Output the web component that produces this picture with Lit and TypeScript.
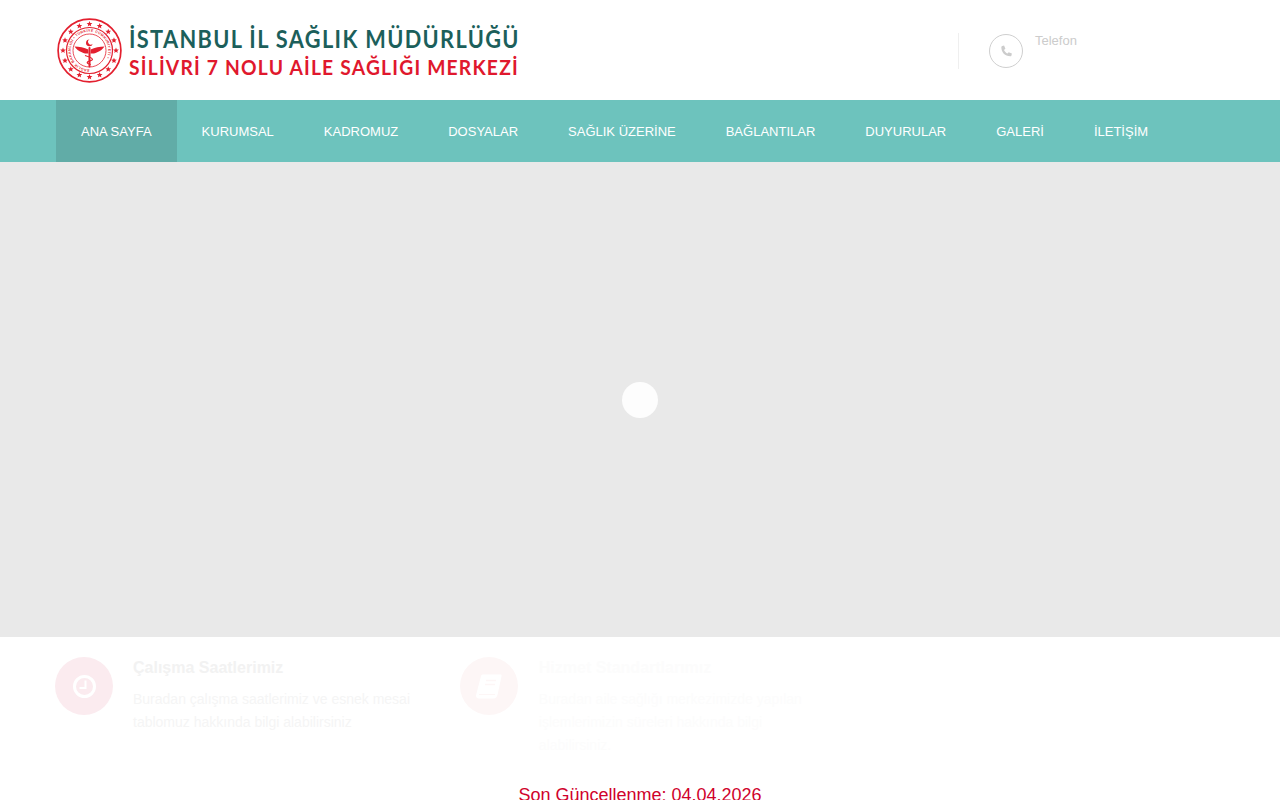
import { LitElement, html, css, svg } from "lit";
import { customElement } from "lit/decorators.js";

const star = (cx: number, cy: number, r: number) => {
  const p: string[] = [];
  for (let i = 0; i < 10; i++) {
    const a = -Math.PI / 2 + (i * Math.PI) / 5;
    const q = i % 2 ? r * 0.45 : r;
    p.push(`${(cx + q * Math.cos(a)).toFixed(2)},${(cy + q * Math.sin(a)).toFixed(2)}`);
  }
  return svg`<polygon points=${p.join(" ")} fill="#e3202f"/>`;
};

const stars = Array.from({ length: 16 }, (_, i) => {
  const a = (i * Math.PI) / 8 - Math.PI / 2;
  return star(32.5 + 26.5 * Math.cos(a), 32.5 + 26.5 * Math.sin(a), 3);
});

const emblem = html`<svg class="emblem" viewBox="0 0 65 65" aria-hidden="true">
  <defs><path id="ringp" d="M32.500 51.300a18.800 18.800 0 1 1 .01 0z"/></defs>
  <circle cx="32.500" cy="32.500" r="31.400" fill="none" stroke="#e3202f" stroke-width="1.700"/>
  <circle cx="32.500" cy="32.500" r="23" fill="none" stroke="#e3202f" stroke-width="1.200"/>
  <circle cx="32.500" cy="32.500" r="16.500" fill="none" stroke="#e3202f" stroke-width=".8"/>
  ${stars}
  <text class="ringtext" fill="#e3202f"><textPath href="#ringp">SAĞLIK BAKANLIĞI • TÜRKİYE CUMHURİYETİ •</textPath></text>
  <path d="M32.500 21.500a3.400 3.400 0 1 0 3.200 4.300 2.700 2.700 0 1 1-3.200-4.300z" fill="#e3202f"/>
  <path d="M17.500 28.500c4.500.2 10 .8 13.800 3l.2 4c-2.800.3-5-.1-6.700-1.300-3-1-5.700-3.100-7.300-5.700zM47.500 28.500c-4.500.2-10 .8-13.800 3l-.2 4c2.800.3 5-.1 6.700-1.300 3-1 5.700-3.100 7.300-5.700z" fill="#e3202f"/>
  <path d="M32.500 30v18.500" stroke="#e3202f" stroke-width="2" stroke-linecap="round"/>
  <path d="M28 37.500c5.500 1.600 7.500 2.600 7.500 3.900s-5.300 1.700-5.300 3.100c0 .9 1.300 1.500 3.500 2" fill="none" stroke="#e3202f" stroke-width="1.200"/>
</svg>`;

const phone = html`<svg class="phone" viewBox="1.500 0 10 10.500" aria-hidden="true">
  <path d="M2.600.7 4.300.3l1.200 2.900-1.300 1.100c.6 1.400 1.800 2.600 3.200 3.300l1.100-1.300 2.900 1.200-.4 1.800c-.1.500-.5.800-1 .8C5 10.100 1.800 6.700 1.800 1.700c0-.5.300-.9.800-1z" fill="#cccccc"/>
</svg>`;

const clock = html`<svg class="glyph" viewBox="0 0 23 23" aria-hidden="true">
  <circle cx="11.500" cy="11.500" r="10" fill="none" stroke="#fff" stroke-width="3"/>
  <path d="M12.500 5.500v7.500H6.500" fill="none" stroke="#fff" stroke-width="2"/>
</svg>`;

const book = html`<svg class="glyph wide" viewBox="0 0 26 25" aria-hidden="true">
  <path d="M7 .5h17.500c.8 0 1.300.7 1.100 1.500l-4 18.500c-.5 2.300-1.700 4-4 4H3c-2 0-3.300-1.500-2.900-3.500L5 2c.2-.9 1-1.500 2-1.500z" fill="#fff"/>
  <path d="M10 6.500h10M9 10.500h10" stroke="#fdf6f6" stroke-width="1.400"/>
  <path d="M3 20.500h16" stroke="#fdf6f6" stroke-width="1"/>
</svg>`;

const nav = ["ANA SAYFA", "KURUMSAL", "KADROMUZ", "DOSYALAR", "SAĞLIK ÜZERİNE", "BAĞLANTILAR", "DUYURULAR", "GALERİ", "İLETİŞİM"];

@customElement("app-root")
export class AppRoot extends LitElement {
  static styles = css`
    :host {
      display: block;
      height: 800px;
      overflow: hidden;
      background: #fff;
      font-family: "Liberation Sans", Arial, sans-serif;
    }
    .top {
      height: 100px;
      display: flex;
      justify-content: space-between;
      padding-left: 57px;
      box-sizing: border-box;
    }
    .logo {
      display: flex;
      align-items: flex-start;
      gap: 7px;
      padding-top: 18px;
    }
    .emblem {
      width: 65px;
      height: 65px;
      flex: none;
    }
    .ringtext {
      font-family: "Liberation Sans", sans-serif;
      font-weight: 700;
      font-size: 3.600px;
      letter-spacing: .35px;
    }
    .logo-text {
      font-family: Lato, sans-serif;
      font-weight: 700;
      white-space: nowrap;
      padding-top: 6px;
    }
    .l1 {
      color: #1c5f5b;
      font-size: 24px;
      line-height: 29px;
      letter-spacing: 1.500px;
      transform: scaleX(.906);
      transform-origin: left center;
    }
    .l2 {
      color: #e0182d;
      font-size: 21px;
      line-height: 28px;
      letter-spacing: 1.300px;
      transform: scaleX(.918);
      transform-origin: left center;
    }
    .contact {
      width: 322px;
      display: flex;
      align-items: flex-start;
      margin-top: 33px;
      height: 36px;
      border-left: 1px solid #efefef;
      padding-left: 30px;
      box-sizing: border-box;
      gap: 12px;
    }
    .ring {
      width: 34px;
      height: 34px;
      margin-top: 1px;
      border: 1px solid #cfcfcf;
      border-radius: 50%;
      box-sizing: border-box;
      display: flex;
      align-items: center;
      justify-content: center;
      flex: none;
    }
    .phone {
      width: 11px;
      height: 12px;
    }
    .tel {
      font-size: 13px;
      line-height: 15px;
      color: #cccccc;
    }
    nav {
      height: 62px;
      background: #6dc3bd;
      display: flex;
      padding-left: 56px;
    }
    nav a {
      padding: 1px 25px 0;
      font-size: 13px;
      line-height: 61px;
      color: #fff;
      white-space: nowrap;
    }
    nav a.on {
      background: #61aca7;
    }
    .hero {
      height: 475px;
      background: #e9e9e9;
      display: flex;
      align-items: center;
      justify-content: center;
    }
    .dot {
      width: 36px;
      height: 36px;
      border-radius: 50%;
      background: #fdfdfd;
      margin-top: 1px;
    }
    .cards {
      display: flex;
      padding: 20px 0 0 55px;
      height: 129px;
      box-sizing: border-box;
    }
    .card {
      display: flex;
      gap: 20px;
      width: 405.300px;
    }
    .card.faint {
      gap: 20.500px;
    }
    .circle {
      width: 58px;
      height: 58px;
      border-radius: 50%;
      flex: none;
      display: flex;
      align-items: center;
      justify-content: center;
      background: #fbebef;
    }
    .glyph {
      width: 23px;
      height: 23px;
    }
    .glyph.wide {
      width: 26px;
      height: 25px;
      margin-top: 1px;
    }
    h3 {
      margin: 0 0 9px;
      font-size: 16px;
      line-height: 22px;
      color: #f2f2f2;
    }
    p {
      margin: 0;
      font-size: 14px;
      line-height: 23px;
      color: #f5f5f5;
      width: 285px;
    }
    .faint .circle {
      background: #fdf6f6;
    }
    .faint h3,
    .faint p {
      color: #fcfcfc;
    }
    .faint p {
      width: 270px;
    }
    .updated {
      text-align: center;
      font-size: 18px;
      line-height: 20px;
      color: #d0022b;
      margin-top: 19px;
    }
  `;

  render() {
    return html`
      <header class="top">
        <div class="logo">
          ${emblem}
          <div class="logo-text">
            <div class="l1">İSTANBUL İL SAĞLIK MÜDÜRLÜĞÜ</div>
            <div class="l2">SİLİVRİ 7 NOLU AİLE SAĞLIĞI MERKEZİ</div>
          </div>
        </div>
        <div class="contact">
          <div class="ring">${phone}</div>
          <div class="tel">Telefon</div>
        </div>
      </header>
      <nav>
        ${nav.map((n, i) => html`<a class=${i === 0 ? "on" : ""}>${n}</a>`)}
      </nav>
      <section class="hero"><div class="dot"></div></section>
      <section class="cards">
        <div class="card">
          <div class="circle">${clock}</div>
          <div>
            <h3>Çalışma Saatlerimiz</h3>
            <p>Buradan çalışma saatlerimiz ve esnek mesai tablomuz hakkında bilgi alabilirsiniz</p>
          </div>
        </div>
        <div class="card faint">
          <div class="circle">${book}</div>
          <div>
            <h3>Hizmet Standartlarımız</h3>
            <p>Buradan aile sağlığı merkezimizde yapılan işlemlerimizin süreleri hakkında bilgi alabilirsiniz.</p>
          </div>
        </div>
      </section>
      <div class="updated">Son Güncellenme: 04.04.2026</div>
    `;
  }
}
